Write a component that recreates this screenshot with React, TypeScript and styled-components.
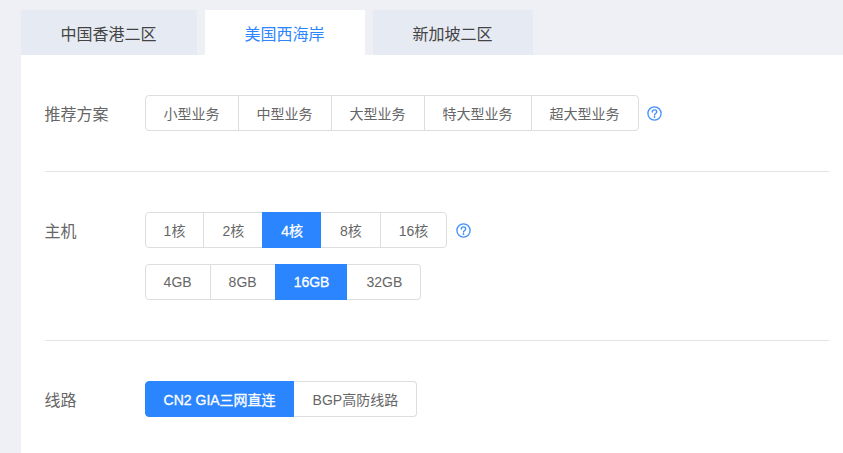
import React from "react";
import styled, { createGlobalStyle } from "styled-components";

const Global = createGlobalStyle`
  html, body { margin: 0; padding: 0; background: #eff0f5; overflow: hidden; }
  body { font-family: "Liberation Sans", "Noto Sans CJK SC", sans-serif; }
`;

const Page = styled.div`
  width: 843px;
  height: 453px;
  padding: 10px 0 0 20.6px;
  box-sizing: border-box;
  overflow: hidden;
`;

const Tabs = styled.div`
  display: flex;
  gap: 8px;
  height: 45px;
`;

const Tab = styled.div<{ $active?: boolean; $width: number }>`
  width: ${(p) => p.$width}px;
  display: flex;
  align-items: center;
  justify-content: center;
  font-size: 16px;
  color: ${(p) => (p.$active ? "#2b85ff" : "#444")};
  background: ${(p) => (p.$active ? "#fff" : "#e6eaf2")};
`;

const Panel = styled.div`
  background: #fff;
  padding: 0 14.4px 0 24px;
  height: 398px;
`;

const Section = styled.section<{ $top: number; $bottom: number; $line?: boolean }>`
  display: flex;
  padding: ${(p) => p.$top}px 0 ${(p) => p.$bottom}px;
  border-bottom: ${(p) => (p.$line ? "1px solid #e2e2e6" : "none")};
`;

const Label = styled.div`
  width: 100px;
  height: 36px;
  flex: none;
  font-size: 16px;
  line-height: 40px;
  color: #666;
`;

const Rows = styled.div`
  display: flex;
  flex-direction: column;
  gap: 16px;
`;

const Row = styled.div`
  display: flex;
  align-items: center;
`;

const Group = styled.div`
  display: flex;
  height: 36px;
  box-sizing: border-box;
`;

const Option = styled.div<{ $active?: boolean }>`
  height: 36px;
  box-sizing: border-box;
  padding: 0 18px;
  margin-left: -1px;
  display: flex;
  align-items: center;
  font-size: 14px;
  white-space: nowrap;
  border: 1px solid ${(p) => (p.$active ? "#2b85ff" : "#dcdde0")};
  background: ${(p) => (p.$active ? "#2b85ff" : "#fff")};
  color: ${(p) => (p.$active ? "#fff" : "#666")};
  -webkit-text-stroke: ${(p) => (p.$active ? "0.3px #fff" : "0")};
  position: relative;
  z-index: ${(p) => (p.$active ? 1 : 0)};
  &:first-child {
    margin-left: 0;
    border-radius: 4px 0 0 4px;
  }
  &:last-child {
    border-radius: 0 4px 4px 0;
  }
`;

const AfterActive = styled(Option)`
  border-left-color: transparent;
  z-index: 2;
`;

const Help = styled.svg`
  width: 15px;
  height: 15px;
  margin-left: 8.4px;
  flex: none;
`;

const HelpIcon = () => (
  <Help viewBox="0 0 15 15" fill="none">
    <circle cx="7.5" cy="7.5" r="6.6" stroke="#3f8ffc" strokeWidth="1.3" />
    <path
      d="M5.3 6c0-1.3.9-2.1 2.2-2.1s2.2.8 2.2 2c0 1.6-2.2 1.6-2.2 3.2"
      stroke="#3f8ffc"
      strokeWidth="1.4"
      strokeLinecap="round"
    />
    <circle cx="7.5" cy="11" r=".9" fill="#3f8ffc" />
  </Help>
);

const Choices = ({ items, active }: { items: string[]; active: string }) => (
  <Group>
    {items.map((t, i) =>
      i > 0 && items[i - 1] === active ? (
        <AfterActive key={t}>{t}</AfterActive>
      ) : (
        <Option key={t} $active={t === active}>
          {t}
        </Option>
      ),
    )}
  </Group>
);

export default function App() {
  return (
    <Page>
      <Global />
      <Tabs>
        <Tab $width={176}>中国香港二区</Tab>
        <Tab $width={160} $active>
          美国西海岸
        </Tab>
        <Tab $width={160}>新加坡二区</Tab>
      </Tabs>
      <Panel>
        <Section $top={40} $bottom={40} $line>
          <Label>推荐方案</Label>
          <Row>
            <Choices
              items={["小型业务", "中型业务", "大型业务", "特大型业务", "超大型业务"]}
              active=""
            />
            <HelpIcon />
          </Row>
        </Section>
        <Section $top={40} $bottom={40} $line>
          <Label>主机</Label>
          <Rows>
            <Row>
              <Choices items={["1核", "2核", "4核", "8核", "16核"]} active="4核" />
              <HelpIcon />
            </Row>
            <Row>
              <Choices items={["4GB", "8GB", "16GB", "32GB"]} active="16GB" />
            </Row>
          </Rows>
        </Section>
        <Section $top={40} $bottom={0}>
          <Label>线路</Label>
          <Row>
            <Choices items={["CN2 GIA三网直连", "BGP高防线路"]} active="CN2 GIA三网直连" />
          </Row>
        </Section>
      </Panel>
    </Page>
  );
}
